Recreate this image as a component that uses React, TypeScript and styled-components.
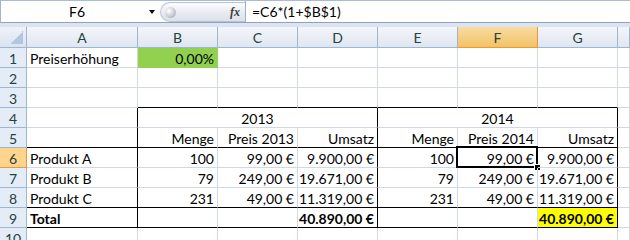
import React from "react";
import styled, { createGlobalStyle } from "styled-components";

const GlobalStyle = createGlobalStyle`
  html, body {
    margin: 0;
    padding: 0;
    background: #ffffff;
  }
  body {
    font-family: Lato, "Open Sans", sans-serif;
    overflow: hidden;
  }
  * {
    box-sizing: border-box;
  }
`;

const Window = styled.div`
  width: 630px;
  height: 240px;
  overflow: hidden;
  display: flex;
  flex-direction: column;
  background: #ffffff;
`;

const FormulaBar = styled.div`
  height: 23px;
  flex: none;
  display: flex;
  align-items: stretch;
  border-top: 1px solid #a9bcd5;
  border-bottom: 1px solid #8ea3be;
  border-left: 1px solid #a5b4c8;
  background: #ffffff;
  font-size: 14px;
  color: #000000;
`;

const NameBox = styled.div`
  width: 159px;
  display: flex;
  align-items: center;
  padding-right: 5px;
`;

const NameText = styled.span`
  flex: 1;
  text-align: center;
  padding-left: 4px;
`;

const DropArrow = styled.span`
  width: 0;
  height: 0;
  border-left: 3.5px solid transparent;
  border-right: 3.5px solid transparent;
  border-top: 4px solid #000000;
  margin-top: 1px;
`;

const Pill = styled.div`
  width: 85px;
  margin: 1px 0 0;
  display: flex;
  align-items: center;
  justify-content: space-between;
  padding: 0 5px 0 4px;
  border: 1px solid #b6c3d3;
  border-right: none;
  border-radius: 11px 0 0 11px;
  background: linear-gradient(#fbfcfd, #e6eaef 60%, #dde2e8);
`;

const Knob = styled.span`
  width: 11px;
  height: 11px;
  border-radius: 50%;
  background: radial-gradient(circle at 35% 35%, #ffffff, #c7ccd3 55%, #9aa2ad);
`;

const Fx = styled.span`
  font-family: "Liberation Serif", serif;
  font-style: italic;
  font-weight: bold;
  font-size: 12px;
  color: #3b3b3b;
`;

const FormulaText = styled.div`
  flex: 1;
  display: flex;
  align-items: center;
  padding-left: 6px;
  border-left: 1px solid #9fb1c8;
`;

const Band = styled.div`
  height: 4px;
  flex: none;
  background: #dbe4f0;
`;

const Sheet = styled.div`
  display: grid;
  grid-template-columns: 27px 111px repeat(6, 80px) 1fr;
  grid-template-rows: 21px;
  grid-auto-rows: 20px;
  font-size: 14px;
`;

const Corner = styled.div`
  display: flex;
  align-items: flex-end;
  justify-content: flex-end;
  padding: 0 3px 3px 0;
  background: linear-gradient(#eef2f8, #dae3ef);
  border-right: 1px solid #9eb6ce;
  border-bottom: 1px solid #9eb6ce;
`;

const CornerMark = styled.span`
  width: 13px;
  height: 13px;
  background: linear-gradient(to bottom right, transparent 50%, #b3c6df 50%);
`;

const ColHead = styled.div<{ $active?: boolean }>`
  display: flex;
  align-items: center;
  justify-content: center;
  padding-top: 1px;
  color: #27413e;
  background: ${(p) =>
    p.$active
      ? "linear-gradient(#f9dba3, #f1c364)"
      : "linear-gradient(#f3f6fa, #dfe6f0)"};
  border-right: 1px solid ${(p) => (p.$active ? "#f29536" : "#9eb6ce")};
  border-bottom: 1px solid ${(p) => (p.$active ? "#f29536" : "#9eb6ce")};
`;

const RowHead = styled.div<{ $active?: boolean }>`
  display: flex;
  align-items: center;
  justify-content: center;
  padding-top: 1px;
  color: #27413e;
  background: ${(p) => (p.$active ? "#ffd58d" : "#e4ecf7")};
  border-right: 1px solid ${(p) => (p.$active ? "#f29536" : "#9eb6ce")};
  border-bottom: 1px solid ${(p) => (p.$active ? "#f29536" : "#9eb6ce")};
`;

type Align = "left" | "right" | "center";

const Cell = styled.div<{
  $align?: Align;
  $bold?: boolean;
  $fill?: string;
  $bb?: boolean;
  $br?: boolean;
  $span?: number;
  $selected?: boolean;
}>`
  position: relative;
  grid-column: span ${(p) => p.$span || 1};
  display: flex;
  align-items: center;
  justify-content: ${(p) =>
    p.$align === "right" ? "flex-end" : p.$align === "center" ? "center" : "flex-start"};
  padding: 2px 3px 0 3px;
  white-space: nowrap;
  color: #000000;
  font-weight: ${(p) => (p.$bold ? 700 : 400)};
  background: ${(p) => p.$fill || "transparent"};
  border-right: 1px solid ${(p) => (p.$br ? "#000000" : p.$fill || "#d0d7e5")};
  border-bottom: 1px solid ${(p) => (p.$bb ? "#000000" : p.$fill || "#d0d7e5")};

  ${(p) =>
    p.$selected &&
    `
    &::before {
      content: "";
      position: absolute;
      left: -2px;
      top: -2px;
      right: -1px;
      bottom: -1px;
      border: 2px solid #000000;
    }
    &::after {
      content: "";
      position: absolute;
      right: -3px;
      bottom: -3px;
      width: 5px;
      height: 5px;
      background: #000000;
      box-shadow: 0 0 0 1px #ffffff;
    }
  `}
`;

type CellDef = {
  text?: string;
  align?: Align;
  bold?: boolean;
  fill?: string;
  bb?: boolean;
  br?: boolean;
  span?: number;
  selected?: boolean;
};

const cols = ["A", "B", "C", "D", "E", "F", "G", ""];

const blank = (n: number, extra: Partial<CellDef> = {}): CellDef[] =>
  Array.from({ length: n }, () => ({ ...extra }));

const r = (text: string, extra: Partial<CellDef> = {}): CellDef => ({
  text,
  align: "right",
  ...extra,
});

const rows: CellDef[][] = [
  [
    { text: "Preiserhöhung" },
    r("0,00%", { fill: "#92d050" }),
    ...blank(6),
  ],
  blank(8),
  [{}, ...blank(6, { bb: true }), {}],
  [
    { br: true },
    { text: "2013", align: "center", span: 3, br: true },
    { text: "2014", align: "center", span: 3, br: true },
    {},
  ],
  [
    { br: true, bb: true },
    r("Menge", { bb: true }),
    r("Preis 2013", { bb: true }),
    r("Umsatz", { bb: true, br: true }),
    r("Menge", { bb: true }),
    r("Preis 2014", { bb: true }),
    r("Umsatz", { bb: true, br: true }),
    {},
  ],
  [
    { text: "Produkt A", br: true },
    r("100"),
    r("99,00 €"),
    r("9.900,00 €", { br: true }),
    r("100"),
    r("99,00 €", { selected: true }),
    r("9.900,00 €", { br: true }),
    {},
  ],
  [
    { text: "Produkt B", br: true },
    r("79"),
    r("249,00 €"),
    r("19.671,00 €", { br: true }),
    r("79"),
    r("249,00 €"),
    r("19.671,00 €", { br: true }),
    {},
  ],
  [
    { text: "Produkt C", br: true, bb: true },
    r("231", { bb: true }),
    r("49,00 €", { bb: true }),
    r("11.319,00 €", { bb: true, br: true }),
    r("231", { bb: true }),
    r("49,00 €", { bb: true }),
    r("11.319,00 €", { bb: true, br: true }),
    {},
  ],
  [
    { text: "Total", bold: true, br: true, bb: true },
    { bb: true },
    { bb: true },
    r("40.890,00 €", { bold: true, bb: true, br: true }),
    { bb: true },
    { bb: true },
    r("40.890,00 €", { bold: true, bb: true, br: true, fill: "#ffff00" }),
    {},
  ],
  blank(8),
];

const App: React.FC = () => {
  return (
    <Window>
      <GlobalStyle />
      <FormulaBar>
        <NameBox>
          <NameText>F6</NameText>
          <DropArrow />
        </NameBox>
        <Pill>
          <Knob />
          <Fx>fx</Fx>
        </Pill>
        <FormulaText>=C6*(1+$B$1)</FormulaText>
      </FormulaBar>
      <Band />
      <Sheet>
        <Corner>
          <CornerMark />
        </Corner>
        {cols.map((c) => (
          <ColHead key={c || "H"} $active={c === "F"}>
            {c}
          </ColHead>
        ))}
        {rows.map((cells, i) => (
          <React.Fragment key={i}>
            <RowHead $active={i === 5}>{i + 1}</RowHead>
            {cells.map((cell, j) => (
              <Cell
                key={j}
                $align={cell.align}
                $bold={cell.bold}
                $fill={cell.fill}
                $bb={cell.bb}
                $br={cell.br}
                $span={cell.span}
                $selected={cell.selected}
              >
                {cell.text}
              </Cell>
            ))}
          </React.Fragment>
        ))}
      </Sheet>
    </Window>
  );
};

export default App;
